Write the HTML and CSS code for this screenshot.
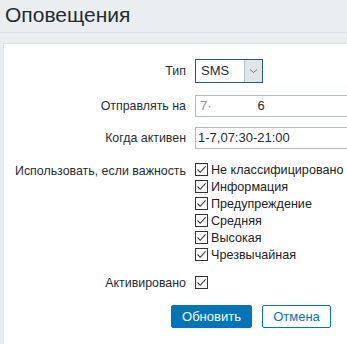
FILE: index.html
```html
<!DOCTYPE html>
<html lang="ru">

<head>
    <meta charset="UTF-8">
    <meta name="viewport" content="width=device-width, initial-scale=1.0">
    <title>Оповещения</title>
    <link rel="stylesheet" href="styles.css">
</head>

<body>
    <!-- Header -->
    <header class="page-header">
        <h1>Оповещения</h1>
    </header>

    <!-- Media form -->
    <div class="panel">
        <form class="media-form">
            <div class="row row-type">
                <label class="lbl">Тип</label>
                <div class="select">
                    <span class="select-value">SMS</span>
                    <span class="select-arrow">
                        <svg width="9" height="6" viewBox="0 0 9 6"><path d="M1 1.5 L4.5 4.5 L8 1.5" fill="none" stroke="#6a7378" stroke-width="1"/></svg>
                    </span>
                </div>
            </div>

            <div class="row row-sendto">
                <label class="lbl">Отправлять на</label>
                <div class="input"><span class="masked">7·</span><span class="digit">6</span></div>
            </div>

            <div class="row row-period">
                <label class="lbl">Когда активен</label>
                <div class="input">1-7,07:30-21:00</div>
            </div>

            <div class="row row-severity">
                <label class="lbl lbl-top">Использовать, если важность</label>
                <ul class="checks">
                    <li><span class="box"><svg width="11" height="11" viewBox="0 0 11 11"><path d="M1.5 5.5 L4.2 8.3 L9.6 2.4" fill="none" stroke="#333" stroke-width="1.1"/></svg></span>Не классифицировано</li>
                    <li><span class="box"><svg width="11" height="11" viewBox="0 0 11 11"><path d="M1.5 5.5 L4.2 8.3 L9.6 2.4" fill="none" stroke="#333" stroke-width="1.1"/></svg></span>Информация</li>
                    <li><span class="box"><svg width="11" height="11" viewBox="0 0 11 11"><path d="M1.5 5.5 L4.2 8.3 L9.6 2.4" fill="none" stroke="#333" stroke-width="1.1"/></svg></span>Предупреждение</li>
                    <li><span class="box"><svg width="11" height="11" viewBox="0 0 11 11"><path d="M1.5 5.5 L4.2 8.3 L9.6 2.4" fill="none" stroke="#333" stroke-width="1.1"/></svg></span>Средняя</li>
                    <li><span class="box"><svg width="11" height="11" viewBox="0 0 11 11"><path d="M1.5 5.5 L4.2 8.3 L9.6 2.4" fill="none" stroke="#333" stroke-width="1.1"/></svg></span>Высокая</li>
                    <li><span class="box"><svg width="11" height="11" viewBox="0 0 11 11"><path d="M1.5 5.5 L4.2 8.3 L9.6 2.4" fill="none" stroke="#333" stroke-width="1.1"/></svg></span>Чрезвычайная</li>
                </ul>
            </div>

            <div class="row row-active">
                <label class="lbl">Активировано</label>
                <span class="box"><svg width="11" height="11" viewBox="0 0 11 11"><path d="M1.5 5.5 L4.2 8.3 L9.6 2.4" fill="none" stroke="#333" stroke-width="1.1"/></svg></span>
            </div>

            <!-- Buttons -->
            <div class="buttons">
                <button type="button" class="btn btn-primary">Обновить</button>
                <button type="button" class="btn btn-alt">Отмена</button>
            </div>
        </form>
    </div>
</body>

</html>
```

FILE: styles.css
```css
/* Global Styles */
body {
    font-family: Arial, "Liberation Sans", sans-serif;
    font-size: 12px;
    margin: 0;
    padding: 0;
    background-color: #ebeef0;
    color: #1f2c33;
    overflow: hidden;
}

/* Header */
.page-header {
    height: 32px;
    border-bottom: 1px solid #dde2e6;
    margin-bottom: 10px;
}

.page-header h1 {
    margin: 0;
    padding: 2px 0 0 5px;
    font-size: 21px;
    font-weight: normal;
    line-height: 26px;
}

/* Panel */
.panel {
    margin-left: 3px;
    background: white;
    border: 1px solid #dfe4e7;
    border-right: none;
    padding: 15px 0 30px;
    overflow: hidden;
}

/* Form rows */
.row {
    display: flex;
    align-items: center;
}

.lbl {
    flex: 0 0 182px;
    margin-right: 9px;
    text-align: right;
    font-size: 12.4px;
}

.lbl-top {
    align-self: flex-start;
    padding-top: 3px;
}

.row-sendto {
    margin-top: 12px;
}

.row-period {
    margin-top: 10px;
}

.row-severity {
    margin-top: 12px;
}

.row-active {
    margin-top: 11px;
    height: 17px;
}

/* Select */
.select {
    display: flex;
    width: 68px;
    height: 24px;
    box-sizing: border-box;
    border: 1px solid #2b5871;
    background: white;
}

.select-value {
    flex: 1;
    padding-left: 5px;
    line-height: 22px;
    font-size: 13px;
}

.select-arrow {
    width: 17px;
    background: #e1e5e8;
    border-left: 1px solid #b7c2c8;
    display: flex;
    align-items: center;
    justify-content: center;
}

/* Text inputs */
.input {
    flex: none;
    width: 300px;
    height: 22px;
    box-sizing: border-box;
    border: 1px solid #acbbc2;
    padding-left: 2px;
    line-height: 20px;
    font-size: 13px;
    white-space: pre;
}

.masked {
    color: #8a9297;
    padding-left: 2px;
}

.digit {
    margin-left: 46px;
}

/* Checkboxes */
.checks {
    list-style: none;
    margin: 0;
    padding: 0;
}

.checks li {
    display: flex;
    align-items: center;
    height: 17px;
    font-size: 12.6px;
    color: #222;
    white-space: nowrap;
}

.box {
    width: 13px;
    height: 13px;
    box-sizing: border-box;
    border: 1px solid #333;
    background: white;
    display: inline-flex;
    align-items: center;
    justify-content: center;
    margin-right: 3px;
    flex: none;
}

/* Buttons */
.buttons {
    display: flex;
    gap: 10px;
    margin-top: 14px;
    padding-left: 167px;
}

.btn {
    height: 23px;
    box-sizing: border-box;
    border: 1px solid #0275b8;
    border-radius: 2px;
    font-family: Arial, "Liberation Sans", sans-serif;
    font-size: 13px;
    padding: 0;
    cursor: pointer;
}

.btn-primary {
    width: 81px;
    background: #0275b8;
    color: white;
}

.btn-alt {
    width: 69px;
    background: white;
    color: #0275b8;
}
```
